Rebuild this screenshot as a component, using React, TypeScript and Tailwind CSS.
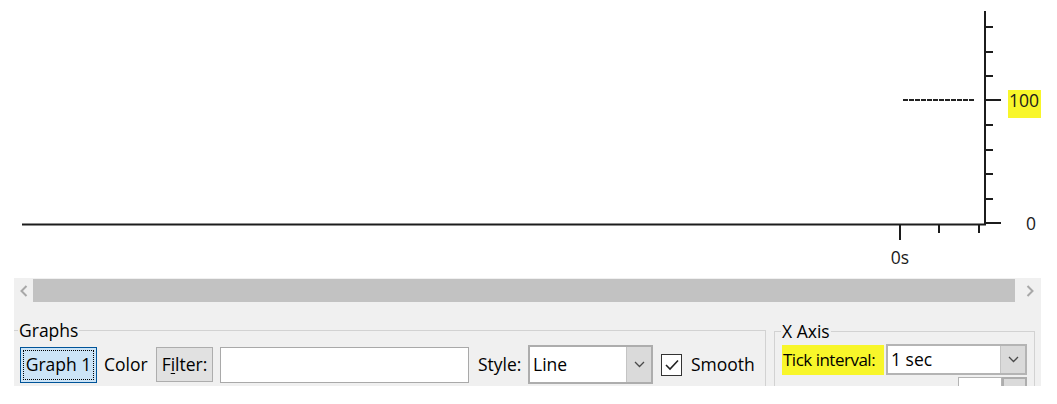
import React from 'react';

const Chevron: React.FC = () => (
  <svg width="11" height="7" viewBox="0 0 11 7">
    <path d="M1 1 L5.5 5.5 L10 1" fill="none" stroke="#4a4a4a" strokeWidth="1.3" />
  </svg>
);

const ComboBox: React.FC<{ value: string; className: string }> = ({ value, className }) => (
  <div className={`flex border-2 border-[#adadad] bg-white ${className}`}>
    <div className="flex-1 flex items-center pl-[3px] leading-none">{value}</div>
    <div className="w-[25px] bg-[#dadada] border-l border-[#c4c4c4] flex items-center justify-center">
      <Chevron />
    </div>
  </div>
);

const Chart: React.FC = () => {
  const minor = [27, 52, 76, 125, 150, 174, 199];
  return (
    <svg width="1057" height="278" className="block">
      <line x1="22" y1="224.5" x2="986" y2="224.5" stroke="#1c1c1c" strokeWidth="2" />
      <line x1="985" y1="11" x2="985" y2="224" stroke="#1c1c1c" strokeWidth="2" />
      {minor.map(y => (
        <line key={y} x1="985" y1={y} x2="993" y2={y} stroke="#1c1c1c" strokeWidth="2" />
      ))}
      <line x1="985" y1="100" x2="1001" y2="100" stroke="#1c1c1c" strokeWidth="2" />
      <line x1="985" y1="223" x2="1001" y2="223" stroke="#1c1c1c" strokeWidth="2" />
      <line x1="900" y1="225" x2="900" y2="240" stroke="#1c1c1c" strokeWidth="2" />
      <line x1="939" y1="225" x2="939" y2="233" stroke="#1c1c1c" strokeWidth="2" />
      <line x1="979" y1="225" x2="979" y2="233" stroke="#1c1c1c" strokeWidth="2" />
      <line x1="903" y1="100" x2="974" y2="100" stroke="#222222" strokeWidth="1.8" strokeDasharray="5 1" />
      <rect x="1008" y="90" width="33" height="28" fill="#f8f62a" />
      <text x="1009" y="107" fontSize="17.5" fill="#1a1a1a">100</text>
      <text x="1026" y="230" fontSize="17.5" fill="#1a1a1a">0</text>
      <text x="900" y="264" fontSize="17.5" fill="#1a1a1a" textAnchor="middle">0s</text>
    </svg>
  );
};

const App: React.FC = () => {
  return (
    <div className="w-[1057px] h-[404px] bg-white overflow-hidden font-['Open_Sans',sans-serif] text-[17.5px] text-black">
      <div className="h-[278px]">
        <Chart />
      </div>

      <div className="ml-[14px] w-[1027px] h-[108px] bg-[#f0f0f0] overflow-hidden">
        {/* horizontal scrollbar */}
        <div className="flex h-[25px] pt-[1px]">
          <div className="w-[19px] flex items-center justify-center">
            <svg width="8" height="12" viewBox="0 0 8 12">
              <path d="M6.5 1 L1.5 6 L6.5 11" fill="none" stroke="#a8a8a8" strokeWidth="2" />
            </svg>
          </div>
          <div className="w-[982px] h-[23px] bg-[#c2c2c2]" />
          <div className="flex-1 flex items-center justify-center pl-[4px]">
            <svg width="8" height="12" viewBox="0 0 8 12">
              <path d="M1.5 1 L6.5 6 L1.5 11" fill="none" stroke="#a8a8a8" strokeWidth="2" />
            </svg>
          </div>
        </div>

        <div className="flex items-start mt-[17px]">
          {/* Graphs group */}
          <fieldset className="w-[752px] h-[90px] border-t border-r border-[#d2d2d2]">
            <legend className="ml-[4px] px-[1px] leading-[20px]">Graphs</legend>
            <div className="flex items-center h-[39px] mt-[5px] pl-[6px]">
              <div className="w-[77px] h-[36px] bg-[#cce4f7] border border-[#005499] p-[2px]">
                <div className="w-full h-full border border-dotted border-black flex items-center justify-center leading-none">
                  Graph 1
                </div>
              </div>
              <span className="ml-[7px] w-[45px] leading-none">Color</span>
              <div className="ml-[7px] w-[57px] h-[35px] bg-[#e1e1e1] border border-[#adadad] flex items-center justify-center leading-none">
                <span>F<span className="underline underline-offset-2">i</span>lter:</span>
              </div>
              <div className="ml-[7px] w-[249px] h-[36px] bg-white border border-[#a9a9a9]" />
              <span className="ml-[9px] w-[44px] leading-none">Style:</span>
              <ComboBox value="Line" className="ml-[6px] w-[125px] h-[39px]" />
              <div className="ml-[8px] w-[21px] h-[22px] bg-white border-[1.5px] border-[#333333] flex items-center justify-center">
                <svg width="16" height="14" viewBox="0 0 16 14">
                  <path d="M2 7 L6 11 L14 2.5" fill="none" stroke="#222222" strokeWidth="1.6" />
                </svg>
              </div>
              <span className="ml-[9px] leading-none">Smooth</span>
            </div>
          </fieldset>

          {/* X Axis group */}
          <fieldset className="ml-[8px] w-[261px] h-[90px] border border-[#d2d2d2] mt-[1px]">
            <legend className="ml-[6px] px-[1px] leading-[20px]">X Axis</legend>
            <div className="flex items-center mt-[3px] pl-[7px]">
              <span className="w-[102px] h-[30px] bg-[#f8f62a] flex items-center pl-[1px] leading-none whitespace-nowrap tracking-[-0.5px] text-[17px]">
                Tick interval:
              </span>
              <ComboBox value="1 sec" className="ml-[2px] w-[141px] h-[31px] border-[#b4b4b4]" />
            </div>
            <div className="flex mt-[2px] pl-[183px]">
              <div className="w-[44px] h-[20px] bg-white border border-[#b4b4b4]" />
              <div className="w-[25px] h-[20px] bg-[#dadada] border-2 border-[#adadad]" />
            </div>
          </fieldset>
        </div>
      </div>
    </div>
  );
};

export default App;
